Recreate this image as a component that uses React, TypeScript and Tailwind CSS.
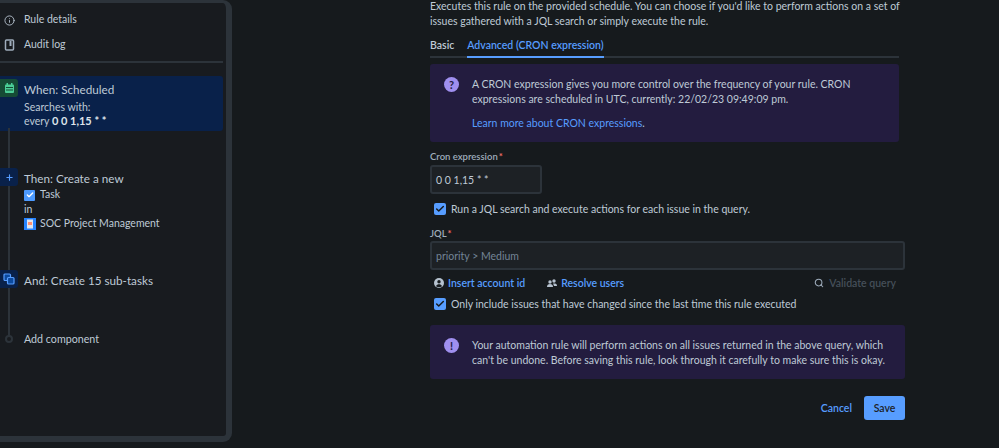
import { Info, Search, Plus, Check } from "lucide-react";

const font = "font-['Lato','Open_Sans',sans-serif]";

function CheckBox() {
  return (
    <span className="flex h-[12px] w-[12px] shrink-0 items-center justify-center rounded-[2px] bg-[#579dff]">
      <Check size={10} strokeWidth={3.5} className="text-[#161a1d]" />
    </span>
  );
}

function Sidebar() {
  return (
    <aside className="relative h-[442px] w-[232px] shrink-0 rounded-r-[9px] border-t-[3px] border-r-[6px] border-b-[6px] border-[#2c333a] bg-[#181b1f] text-[#bfcad6]">
      {/* timeline line */}
      <div className="absolute top-[125px] left-[8px] h-[208px] w-[2px] bg-[#2c333a]" />

      <div className="mr-[3px] flex h-[60px] flex-col border-b-[2px] border-[#2c333a] pt-[6px] text-[10.5px]">
        <div className="flex h-[22px] items-center gap-[9px] pl-[4px]">
          <Info size={11} className="text-[#b6c2cf]" />
          <span>Rule details</span>
        </div>
        <div className="mt-[3px] flex h-[22px] items-center gap-[9px] pl-[4px]">
          <svg width="11" height="12" viewBox="0 0 11 12">
            <rect x="1.500" y="1" width="8" height="10" rx="1" fill="none" stroke="#9fadbc" strokeWidth="1.500" />
            <rect x="5.500" y="2" width="2" height="5" fill="#9fadbc" />
          </svg>
          <span>Audit log</span>
        </div>
      </div>

      <div className="mt-[13px] mr-[3px] h-[55px] rounded-r-[3px] bg-[#09214a] pt-[3px]">
        <div className="relative z-10 flex">
          <div className="flex h-[18px] w-[18px] items-center justify-center rounded-r-[3px] bg-[#164b35]">
            <svg width="11" height="11" viewBox="0 0 11 11">
              <rect x="1" y="1.500" width="9" height="8.500" rx="1" fill="#4bce97" />
              <rect x="2.500" y="0" width="1.500" height="2" fill="#4bce97" />
              <rect x="7" y="0" width="1.500" height="2" fill="#4bce97" />
              <rect x="2" y="4" width="7" height="1" fill="#164b35" />
              <rect x="2" y="6.500" width="7" height="1" fill="#164b35" />
            </svg>
          </div>
          <div className="ml-[6px]">
            <div className="h-[20px] text-[11.7px] leading-[20px]">When: Scheduled</div>
            <div className="mt-[1px] text-[10.5px] leading-[14px]">Searches with:</div>
            <div className="text-[10.5px] leading-[14px]">
              every <b className="text-[11px] font-bold text-[#dee4ea]">0 0 1,15 * *</b>
            </div>
          </div>
        </div>
      </div>

      <div className="relative z-10 mt-[37px] flex">
        <div className="flex h-[18px] w-[18px] items-center justify-center rounded-r-[3px] bg-[#09214a]">
          <Plus size={9} strokeWidth={3} className="text-[#579dff]" />
        </div>
        <div className="ml-[6px]">
          <div className="h-[20px] text-[11.7px] leading-[20px]">Then: Create a new</div>
          <div className="flex h-[14px] items-center gap-[5px] text-[10.5px]">
            <span className="flex h-[11px] w-[11px] items-center justify-center rounded-[1px] bg-[#4c9aff]">
              <Check size={8} strokeWidth={4} className="text-white" />
            </span>
            Task
          </div>
          <div className="h-[15px] text-[10.5px] leading-[15px]">in</div>
          <div className="flex h-[14px] items-center gap-[4px] text-[10.5px]">
            <svg width="12" height="12" viewBox="0 0 12 12">
              <rect width="12" height="12" fill="#2684ff" />
              <rect x="3" y="1.500" width="6" height="9" fill="#dfe6f0" />
              <rect x="4" y="4" width="4" height="3" fill="#ff8f73" />
            </svg>
            SOC Project Management
          </div>
        </div>
      </div>

      <div className="relative z-10 mt-[39px] flex">
        <div className="flex h-[18px] w-[18px] items-center justify-center rounded-r-[3px] bg-[#09214a]">
          <svg width="12" height="12" viewBox="0 0 12 12" fill="none" stroke="#579dff" strokeWidth="1.200">
            <rect x="1" y="1" width="6.500" height="6.500" rx="1" fill="#0c4a9e" />
            <rect x="4.500" y="4.500" width="6.500" height="6.500" rx="1" fill="#0c4a9e" />
          </svg>
        </div>
        <div className="ml-[6px] h-[20px] text-[11.7px] leading-[20px]">And: Create 15 sub-tasks</div>
      </div>

      <div className="relative z-10 mt-[41px] flex items-center">
        <span className="ml-[5px] h-[8px] w-[8px] rounded-full border-[2px] border-[#2c333a] bg-[#181b1f]" />
        <span className="ml-[11px] text-[10.7px]">Add component</span>
      </div>
    </aside>
  );
}

function Notice({ icon, children, className }: { icon: React.ReactNode; children: React.ReactNode; className: string }) {
  return (
    <div className={`flex rounded-[3px] bg-[#231c3f] pl-[14px] whitespace-nowrap ${className}`}>
      <div className="w-[28px] shrink-0">{icon}</div>
      <div>{children}</div>
    </div>
  );
}

function RoundIcon({ mark }: { mark: string }) {
  return (
    <span className="flex h-[15px] w-[15px] items-center justify-center rounded-full bg-[#9f8fef] text-[11px] leading-none font-bold text-[#231c3f]">
      {mark}
    </span>
  );
}

export default function App() {
  return (
    <div className={`flex h-[448px] w-[999px] overflow-hidden bg-[#161a1d] ${font} text-[#bfcad6]`}>
      <Sidebar />

      <main className="ml-[198px] w-[475px] shrink-0 text-[10.5px] leading-[15px]">
        <p className="-mt-[1px] whitespace-nowrap">
          Executes this rule on the provided schedule. You can choose if you'd like to perform actions on a set of
          <br />
          issues gathered with a JQL search or simply execute the rule.
        </p>

        <div className="mt-[9px] mr-[6px] flex h-[20px] gap-[13px] border-b-[2px] border-[#2c333a] font-semibold">
          <span className="h-[20px]">Basic</span>
          <span className="h-[20px] border-b-[2px] border-[#579dff] text-[#579dff]">
            Advanced (CRON expression)
          </span>
        </div>

        <Notice className="mt-[6px] mr-[6px] h-[78px] pt-[13px]" icon={<RoundIcon mark="?" />}>
          <p>
            A CRON expression gives you more control over the frequency of your rule. CRON
            <br />
            expressions are scheduled in UTC, currently: 22/02/23 09:49:09 pm.
          </p>
          <p className="mt-[9px] text-[#579dff]">
            Learn more about CRON expressions<span className="text-[#bfcad6]">.</span>
          </p>
        </Notice>

        <label className="mt-[7px] flex h-[14px] items-center text-[9.5px] font-semibold text-[#9fadbc]">
          Cron expression<span className="ml-[1px] text-[#f87168]">*</span>
        </label>
        <div className="mt-[2px] flex h-[29px] w-[112px] items-center rounded-[3px] border-[2px] border-[#2c333a] bg-[#1d2125] pt-[2px] pl-[4px]">
          0 0 1,15 * *
        </div>

        <div className="mt-[7px] flex h-[16px] items-center gap-[5px] pl-[4px]">
          <CheckBox />
          <span>Run a JQL search and execute actions for each issue in the query.</span>
        </div>

        <label className="mt-[9px] flex h-[14px] items-center text-[9.5px] font-semibold text-[#9fadbc]">
          JQL<span className="ml-[1px] text-[#f87168]">*</span>
        </label>
        <div className="mt-[1px] flex h-[29px] items-center rounded-[3px] border-[2px] border-[#2c333a] bg-[#1d2125] pt-[2px] pl-[4px] text-[#738496]">
          priority &gt; Medium
        </div>

        <div className="mt-[5px] flex h-[16px] items-center pl-[4px] font-semibold text-[#579dff]">
          <svg width="10" height="10" viewBox="0 0 10 10" className="mr-[4px]">
            <circle cx="5" cy="5" r="5" fill="#b6c2cf" />
            <circle cx="5" cy="3.800" r="1.700" fill="#161a1d" />
            <path d="M2 8.200c.6-1.500 1.700-2 3-2s2.400.5 3 2a5 5 0 0 1-6 0z" fill="#161a1d" />
          </svg>
          <span>Insert account id</span>
          <svg width="10" height="9" viewBox="0 0 10 9" className="mr-[4px] ml-[22px]">
            <circle cx="3" cy="3" r="1.700" fill="#b6c2cf" />
            <circle cx="7" cy="2" r="1.700" fill="#b6c2cf" />
            <path d="M0 8c0-2 1-3 3-3s3 1 3 3zM6 4.500h2c1.300 0 2 1 2 2.500H7z" fill="#b6c2cf" />
          </svg>
          <span>Resolve users</span>
          <Search size={10} strokeWidth={2.500} className="mr-[5px] ml-auto text-[#9fadbc]" />
          <span className="mr-[9px] text-[#454f59]">Validate query</span>
        </div>

        <div className="mt-[5px] flex h-[16px] items-center gap-[5px] pl-[4px]">
          <CheckBox />
          <span>Only include issues that have changed since the last time this rule executed</span>
        </div>

        <Notice className="mt-[13px] h-[54px] pt-[13px]" icon={<RoundIcon mark="!" />}>
          <p>
            Your automation rule will perform actions on all issues returned in the above query, which
            <br />
            can't be undone. Before saving this rule, look through it carefully to make sure this is okay.
          </p>
        </Notice>

        <div className="mt-[17px] flex items-center justify-end">
          <span className="font-semibold text-[#579dff]">Cancel</span>
          <button className="ml-[12px] h-[24px] w-[41px] rounded-[3px] bg-[#579dff] font-semibold text-[#1d2125]">
            Save
          </button>
        </div>
      </main>
    </div>
  );
}
